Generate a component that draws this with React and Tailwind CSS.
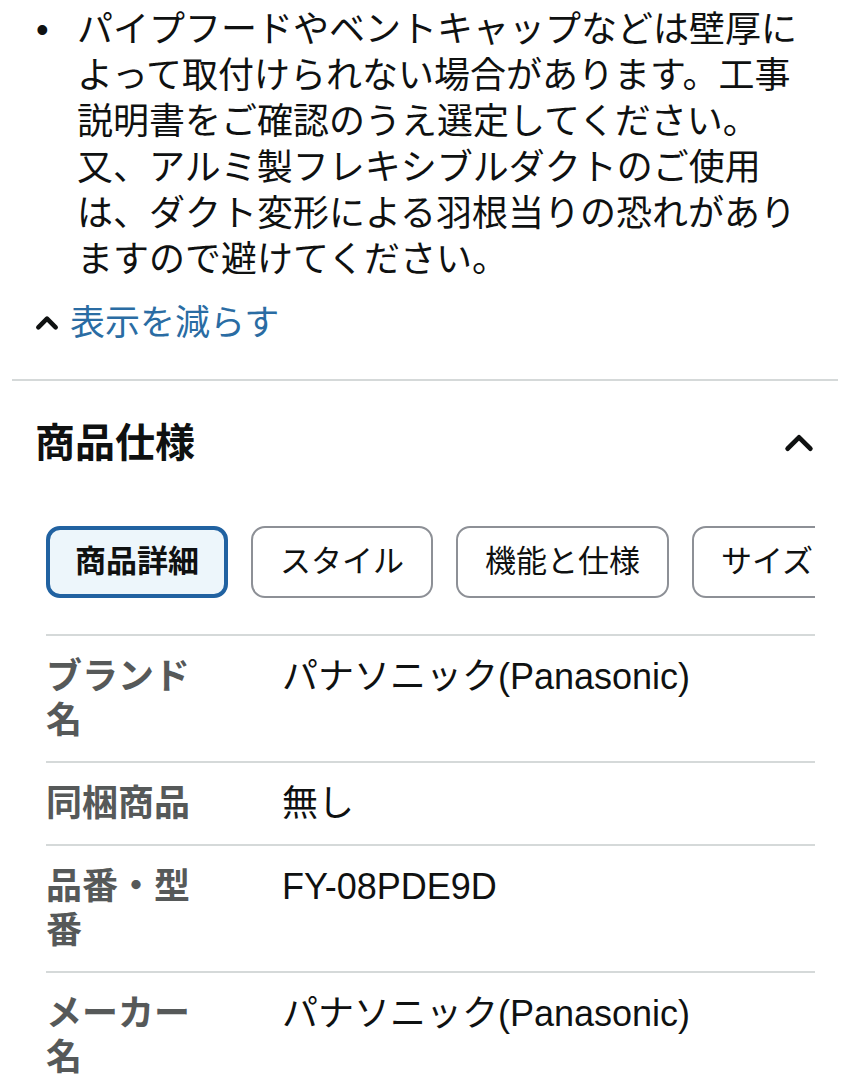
import React from 'react'

const FONT = { fontFamily: '"Liberation Sans", "Noto Sans CJK JP", sans-serif' }

const TABS = ['商品詳細', 'スタイル', '機能と仕様', 'サイズ']

const ROWS = [
  { label: 'ブランド名', value: 'パナソニック(Panasonic)' },
  { label: '同梱商品', value: '無し' },
  { label: '品番・型番', value: 'FY-08PDE9D' },
  { label: 'メーカー名', value: 'パナソニック(Panasonic)' },
]

function Caret({ className, width = 3.4 }) {
  return (
    <svg viewBox="0 0 24 24" className={className} fill="none" stroke="currentColor" strokeWidth={width} strokeLinecap="round" strokeLinejoin="round">
      <path d="M4 16 L12 8 L20 16" />
    </svg>
  )
}

export default function App() {
  return (
    <div className="w-[850px] h-[1080px] overflow-hidden bg-white text-[#0f1111]" style={FONT}>
      {/* bullet note */}
      <div className="flex pl-[36px] pt-[7px]">
        <span className="w-[41px] shrink-0 text-[36px] leading-[46px]">•</span>
        <p className="w-[724px] text-[36px] leading-[46px]">
          パイプフードやベントキャップなどは壁厚によって取付けられない場合があります。工事説明書をご確認のうえ選定してください。
          <br />
          又、アルミ製フレキシブルダクトのご使用は、ダクト変形による羽根当りの恐れがありますので避けてください。
        </p>
      </div>

      {/* show less */}
      <div className="flex items-center gap-[10px] pl-[34px] mt-[17px]">
        <Caret className="w-[26px] h-[26px] text-[#0f1111]" width={4.2} />
        <span className="text-[35px] leading-[46px] text-[#2a6ca3]">表示を減らす</span>
      </div>

      <div className="mx-[12px] mt-[33px] h-[2px] bg-[#d5d9d9]" />

      {/* spec section */}
      <div className="flex items-center justify-between pl-[35px] pr-[34px] mt-[37px]">
        <h2 className="text-[40px] leading-[50px] font-bold">商品仕様</h2>
        <Caret className="w-[34px] h-[34px] text-[#0f1111]" />
      </div>

      <div className="ml-[46px] w-[769px] mt-[58px] overflow-hidden">
        <div className="flex gap-[23px] w-max">
          {TABS.map((t, i) =>
            i === 0 ? (
              <div key={t} className="h-[72px] px-[25px] flex items-center rounded-[14px] border-[4px] border-[#2162a1] bg-[#edf6fb] text-[31px] font-bold">
                {t}
              </div>
            ) : (
              <div key={t} className="h-[72px] px-[27px] flex items-center rounded-[14px] border-[2px] border-[#8d9096] bg-white text-[31px] text-[#0f1111]">
                {t}
              </div>
            )
          )}
        </div>
      </div>

      {/* table */}
      <div className="ml-[46px] w-[769px] mt-[36px]">
        {ROWS.map((r) => (
          <div key={r.label} className="flex border-t-[2px] border-[#d5d9d9] pt-[19px] pb-[18px]">
            <div className="w-[150px] shrink-0 text-[36px] leading-[44px] font-semibold text-[#565959]">{r.label}</div>
            <div className="ml-[86px] text-[36px] leading-[44px] text-[#0f1111]">{r.value}</div>
          </div>
        ))}
      </div>
    </div>
  )
}
